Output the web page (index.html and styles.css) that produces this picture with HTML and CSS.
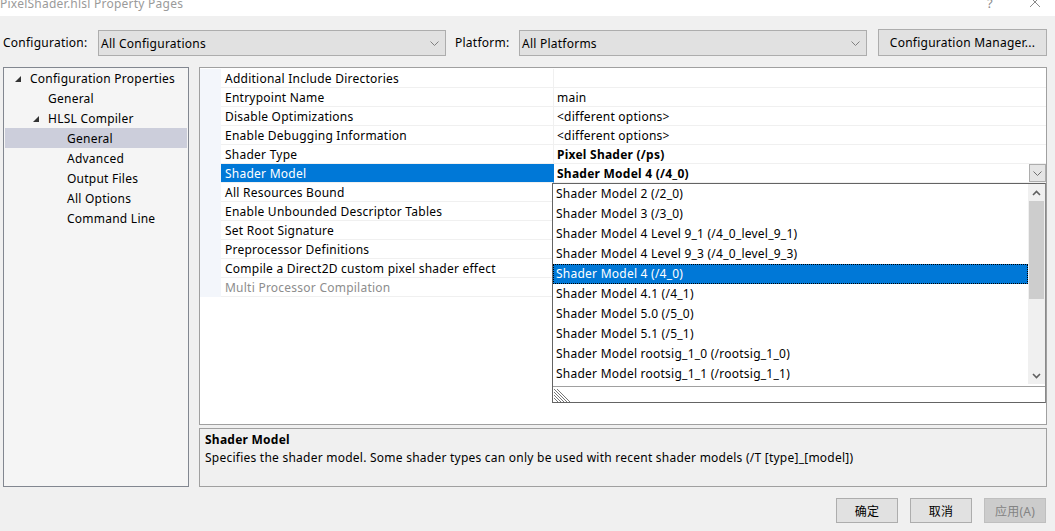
FILE: index.html
```html
<!DOCTYPE html>
<html>
<head>
<meta charset="utf-8">
<link rel="stylesheet" href="styles.css">
</head>
<body>
<div class="window">
  <div class="titlebar">
    <span class="title">PixelShader.hlsl Property Pages</span>
    <span class="tb-btns">
      <span class="help">?</span>
      <svg class="close" width="12" height="12" viewBox="0 0 12 12"><path d="M1 1 L11 11 M11 1 L1 11" stroke="#8a8a8a" stroke-width="1" fill="none"/></svg>
    </span>
  </div>

  <div class="toolbar">
    <span class="lbl cfg-lbl">Configuration:</span>
    <div class="combo">
      <span>All Configurations</span>
      <svg class="chev" width="9" height="5" viewBox="0 0 9 5"><path d="M0.5 0.5 L4.5 4.5 L8.5 0.5" stroke="#808080" fill="none"/></svg>
    </div>
    <span class="lbl plat-lbl">Platform:</span>
    <div class="combo">
      <span>All Platforms</span>
      <svg class="chev" width="9" height="5" viewBox="0 0 9 5"><path d="M0.5 0.5 L4.5 4.5 L8.5 0.5" stroke="#808080" fill="none"/></svg>
    </div>
    <div class="btn cfg-mgr">Configuration Manager...</div>
  </div>

  <div class="main">
    <div class="tree">
      <div class="node lv0"><svg class="tri" width="6" height="6" viewBox="0 0 6 6"><path d="M6 0 L6 6 L0 6 Z" fill="#333"/></svg><span>Configuration Properties</span></div>
      <div class="node lv1"><span>General</span></div>
      <div class="node lv1"><svg class="tri" width="6" height="6" viewBox="0 0 6 6"><path d="M6 0 L6 6 L0 6 Z" fill="#333"/></svg><span>HLSL Compiler</span></div>
      <div class="node lv2 sel"><span>General</span></div>
      <div class="node lv2"><span>Advanced</span></div>
      <div class="node lv2"><span>Output Files</span></div>
      <div class="node lv2"><span>All Options</span></div>
      <div class="node lv2"><span>Command Line</span></div>
    </div>

    <div class="right">
      <div class="grid">
        <div class="row"><div class="gut"></div><div class="name">Additional Include Directories</div><div class="val"></div></div>
        <div class="row"><div class="gut"></div><div class="name">Entrypoint Name</div><div class="val">main</div></div>
        <div class="row"><div class="gut"></div><div class="name">Disable Optimizations</div><div class="val">&lt;different options&gt;</div></div>
        <div class="row"><div class="gut"></div><div class="name">Enable Debugging Information</div><div class="val">&lt;different options&gt;</div></div>
        <div class="row"><div class="gut"></div><div class="name">Shader Type</div><div class="val bold">Pixel Shader (/ps)</div></div>
        <div class="row selrow"><div class="gut"></div><div class="name">Shader Model</div><div class="val bold"><span>Shader Model 4 (/4_0)</span>
          <span class="ddbtn"><svg width="9" height="5" viewBox="0 0 9 5"><path d="M0.5 0.5 L4.5 4.5 L8.5 0.5" stroke="#707070" fill="none"/></svg></span></div></div>
        <div class="row"><div class="gut"></div><div class="name">All Resources Bound</div><div class="val"></div></div>
        <div class="row"><div class="gut"></div><div class="name">Enable Unbounded Descriptor Tables</div><div class="val"></div></div>
        <div class="row"><div class="gut"></div><div class="name">Set Root Signature</div><div class="val"></div></div>
        <div class="row"><div class="gut"></div><div class="name">Preprocessor Definitions</div><div class="val"></div></div>
        <div class="row"><div class="gut"></div><div class="name">Compile a Direct2D custom pixel shader effect</div><div class="val"></div></div>
        <div class="row"><div class="gut"></div><div class="name dis">Multi Processor Compilation</div><div class="val"></div></div>

        <div class="dropdown">
          <div class="dd-body">
            <div class="items">
              <div class="item">Shader Model 2 (/2_0)</div>
              <div class="item">Shader Model 3 (/3_0)</div>
              <div class="item">Shader Model 4 Level 9_1 (/4_0_level_9_1)</div>
              <div class="item">Shader Model 4 Level 9_3 (/4_0_level_9_3)</div>
              <div class="item cur">Shader Model 4 (/4_0)</div>
              <div class="item">Shader Model 4.1 (/4_1)</div>
              <div class="item">Shader Model 5.0 (/5_0)</div>
              <div class="item">Shader Model 5.1 (/5_1)</div>
              <div class="item">Shader Model rootsig_1_0 (/rootsig_1_0)</div>
              <div class="item">Shader Model rootsig_1_1 (/rootsig_1_1)</div>
            </div>
            <div class="sbar">
              <div class="arr"><svg width="9" height="6" viewBox="0 0 9 6"><path d="M1 5 L4.5 1.5 L8 5" stroke="#606060" stroke-width="1.6" fill="none"/></svg></div>
              <div class="track"><div class="thumb"></div></div>
              <div class="arr"><svg width="9" height="6" viewBox="0 0 9 6"><path d="M1 1 L4.5 4.5 L8 1" stroke="#606060" stroke-width="1.6" fill="none"/></svg></div>
            </div>
          </div>
          <div class="grip">
            <svg width="17" height="15" viewBox="0 0 17 15">
              <g stroke="#777" stroke-width="1">
                <path d="M0 2 L13 15"/><path d="M0 5 L10 15"/><path d="M0 8 L7 15"/><path d="M0 11 L4 15"/><path d="M3 2 L16 15"/>
              </g>
            </svg>
          </div>
        </div>
      </div>
      <div class="desc">
        <div class="d-title">Shader Model</div>
        <div class="d-text">Specifies the shader model. Some shader types can only be used with recent shader models (/T [type]_[model])</div>
      </div>
    </div>
  </div>

  <div class="footer">
    <div class="btn fbtn">确定</div>
    <div class="btn fbtn">取消</div>
    <div class="btn fbtn disabled">应用(A)</div>
  </div>
</div>
</body>
</html>
```

FILE: styles.css
```css
* { box-sizing: border-box; }
html, body { margin: 0; padding: 0; }
body {
  width: 1055px;
  height: 531px;
  overflow: hidden;
  background: #f0f0f0;
  font-family: "Noto Sans", "Noto Sans CJK SC", sans-serif;
  font-size: 12px;
  letter-spacing: 0.24px;
  color: #000;
}
.window { width: 1055px; height: 531px; display: flex; flex-direction: column; }

.titlebar {
  height: 16px;
  background: #fff;
  display: flex;
  justify-content: space-between;
  overflow: hidden;
}
.title {
  color: #9a9a9a;
  font-size: 12px;
  line-height: 12px;
  margin-top: -2px;
}
.tb-btns { display: flex; align-items: flex-start; gap: 36px; padding-right: 14px; margin-top: -3px; }
.help { color: #8a8a8a; font-size: 13px; line-height: 13px; }
.close { margin-top: -1px; }

.toolbar {
  height: 51px;
  padding: 14px 0 0 3px;
  display: flex;
  align-items: flex-start;
}
.lbl { line-height: 26px; }
.cfg-lbl { width: 95px; }
.plat-lbl { width: 64px; margin-left: 9px; }
.combo {
  width: 348px;
  height: 26px;
  border: 1px solid #adadad;
  background: #e1e1e1;
  display: flex;
  align-items: center;
  justify-content: space-between;
  padding: 0 6px 0 2px;
}
.chev { display: block; }
.btn {
  border: 1px solid #adadad;
  background: #e1e1e1;
  display: flex;
  align-items: center;
  justify-content: center;
}
.cfg-mgr { width: 169px; height: 27px; margin-left: 11px; margin-top: -1px; }

.main {
  display: flex;
  gap: 10px;
  padding-left: 3px;
  height: 420px;
}
.tree {
  width: 186px;
  height: 420px;
  border: 1px solid #828790;
  background: #f5f5f5;
  padding: 0 0 0 1px;
}
.node {
  height: 20px;
  display: flex;
  align-items: center;
  width: 182px;
  white-space: nowrap;
}
.node.sel { background: #cccedb; }
.tri { display: block; margin-right: 9px; margin-top: 1px; }
.lv0 { padding-left: 10px; }
.lv1 { padding-left: 43px; }
.lv1 .tri { margin-left: -15px; }
.lv2 { padding-left: 62px; }

.right { width: 848px; display: flex; flex-direction: column; gap: 3px; }
.grid {
  position: relative;
  height: 358px;
  border: 1px solid #a0a0a0;
  background: #fff;
  padding-top: 1px;
}
.row {
  display: grid;
  grid-template-columns: 21px 333px 1fr;
  height: 19px;
}
.gut { background: #f3f6fb; }
.name, .val {
  height: 19px;
  border-bottom: 1px solid #f0f0f0;
  padding-top: 1px;
  line-height: 17px;
  white-space: nowrap;
  overflow: hidden;
}
.name { padding-left: 4px; border-right: 1px solid #f0f0f0; }
.val { padding-left: 3px; }
.bold { font-weight: bold; }
.dis { color: #8d8d8d; }
.selrow .name { background: #0078d7; color: #fff; border-right-color: #0078d7; }
.selrow .val { display: flex; justify-content: space-between; padding: 0 0 0 3px; line-height: 18px; }
.selrow .val > span:first-child { padding-top: 1px; }
.ddbtn {
  width: 17px;
  height: 18px;
  border: 1px solid #adadad;
  background: #e5e5e5;
  display: flex;
  align-items: center;
  justify-content: center;
}

.dropdown {
  position: absolute;
  left: 352px;
  top: 115px;
  width: 494px;
  height: 220px;
  border: 1px solid #646464;
  border-right-color: #8a8a8a;
  background: #fff;
  display: flex;
  flex-direction: column;
}
.dd-body { display: flex; height: 202px; }
.items { width: 475px; }
.item {
  height: 20px;
  line-height: 20px;
  padding-left: 3px;
  white-space: nowrap;
}
.item.cur { background: #0078d7; color: #fff; outline: 1px dotted #000; outline-offset: -1px; }
.sbar {
  width: 17px;
  height: 200px;
  background: #f0f0f0;
  display: flex;
  flex-direction: column;
}
.arr { height: 17px; display: flex; align-items: center; justify-content: center; }
.track { flex: 1; }
.thumb { height: 98px; background: #cdcdcd; margin: 0 1px; }
.grip {
  flex: 1;
  border-top: 1px solid #a0a0a0;
  padding-left: 1px;
  display: flex;
  align-items: flex-end;
}
.grip svg { display: block; }

.desc {
  height: 59px;
  border: 1px solid #a0a0a0;
  background: #f0f0f0;
  padding: 2px 0 0 5px;
}
.d-title { font-weight: bold; line-height: 18px; }
.d-text { line-height: 18px; white-space: nowrap; }

.footer {
  display: flex;
  justify-content: flex-end;
  gap: 12px;
  padding: 11px 9px 0 0;
}
.fbtn { width: 62px; height: 25px; font-size: 12px; }
.fbtn.disabled { background: #cccccc; border-color: #bfbfbf; color: #838383; }
```
